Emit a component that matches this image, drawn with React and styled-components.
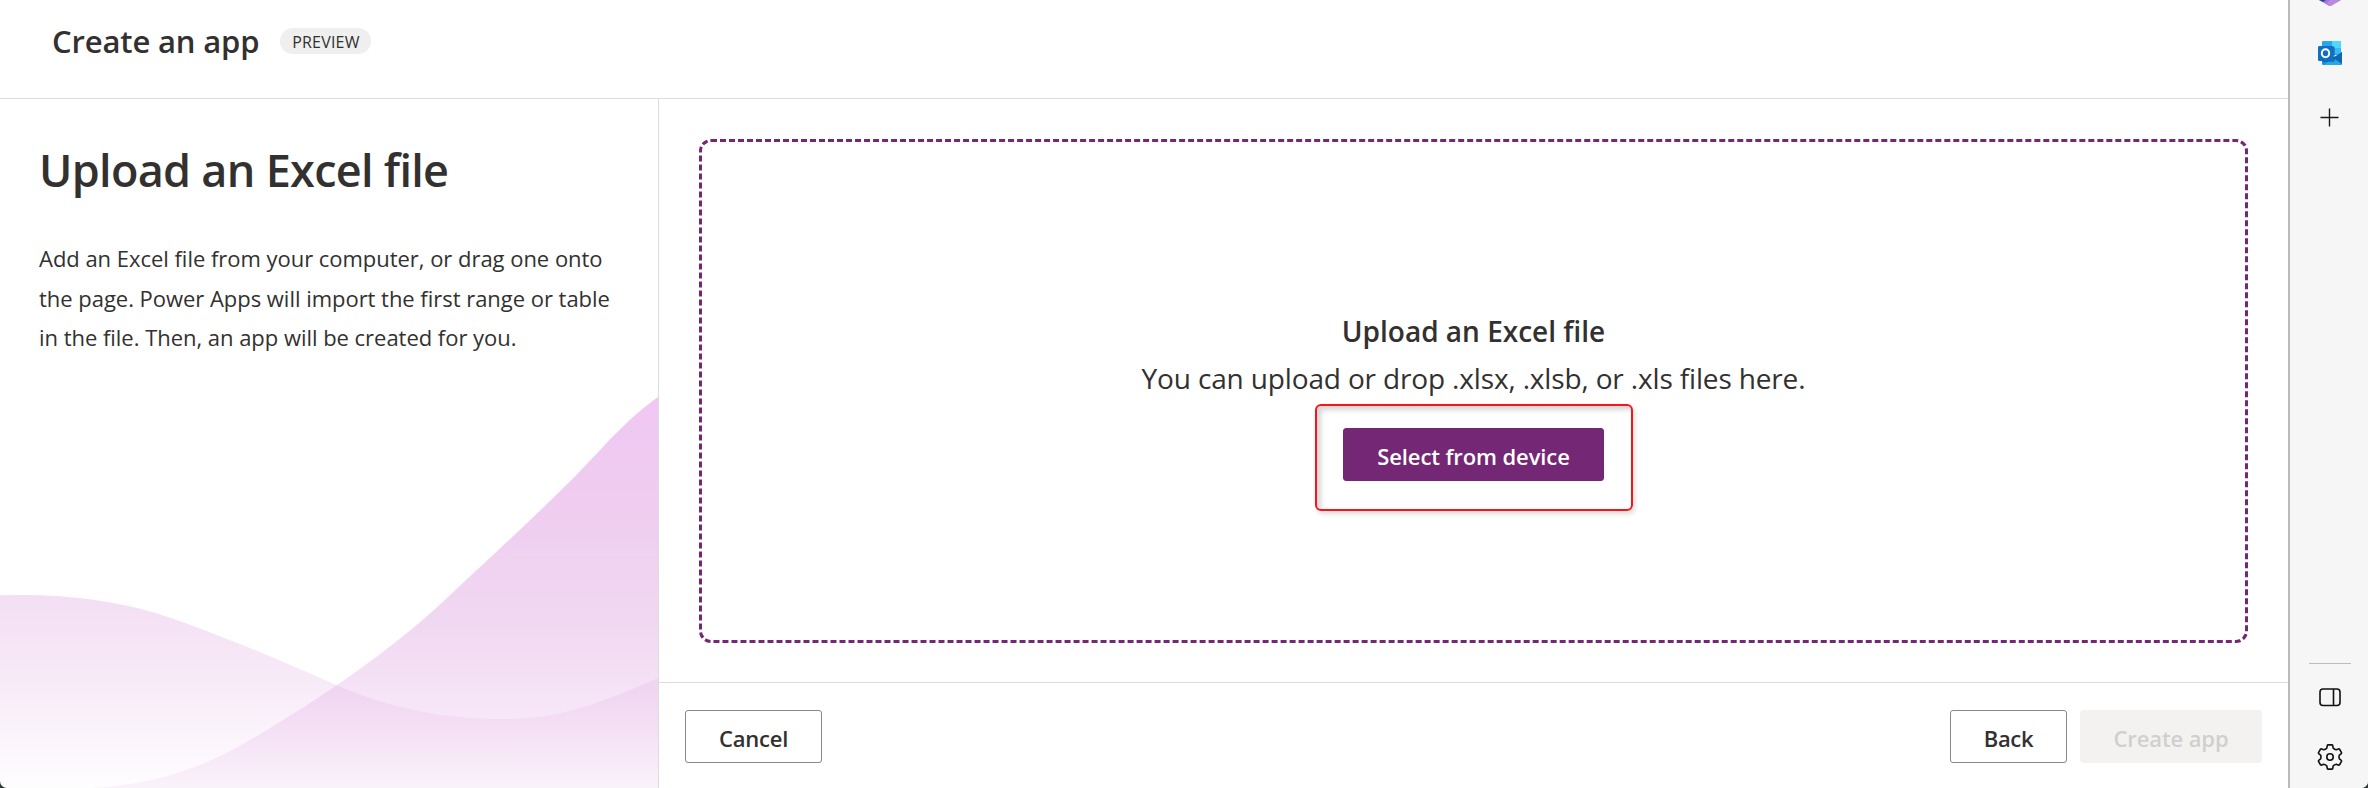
import React from "react";
import styled, { createGlobalStyle } from "styled-components";

const GlobalStyle = createGlobalStyle`
  * { box-sizing: border-box; }
  body {
    margin: 0;
    background: #2f3a36;
    color: #323130;
    font-family: "Open Sans", "Noto Sans", "Liberation Sans", sans-serif;
  }
`;

const Shell = styled.div`
  display: grid;
  grid-template-columns: 1fr 80px;
  height: 788px;
  background: #fff;
  border-radius: 0 0 7px 7px;
  overflow: hidden;
`;

const Page = styled.div`
  display: grid;
  grid-template-rows: 99px 1fr;
  min-width: 0;
`;

const Header = styled.header`
  display: flex;
  align-items: flex-start;
  gap: 21px;
  padding: 18px 0 0 52px;
  border-bottom: 1px solid #dcdcdc;
`;

const Text = styled.span`
  display: block;
  margin: 0;
  font-size: ${(p) => p.$size}px;
  line-height: ${(p) => p.$line}px;
  font-weight: ${(p) => p.$weight || 400};
  letter-spacing: ${(p) => p.$track || 0}px;
  white-space: nowrap;
`;

const Badge = styled.span`
  width: 91px;
  height: 26px;
  margin-top: 10px;
  border-radius: 13px;
  background: #efefef;
  text-align: center;
`;

const Body = styled.div`
  display: grid;
  grid-template-columns: 659px 1fr;
  min-height: 0;
`;

const Intro = styled.aside`
  display: flex;
  flex-direction: column;
  justify-content: space-between;
  padding-top: 36px;
  border-right: 1px solid #dcdcdc;
  min-height: 0;
`;

const IntroCopy = styled.div`
  display: flex;
  flex-direction: column;
  gap: 34px;
  padding-left: 39px;
`;

const Waves = styled.svg`
  display: block;
  width: 658px;
  height: 392px;
  flex: none;
`;

const Main = styled.main`
  display: grid;
  grid-template-rows: 1fr 106px;
`;

const DropArea = styled.section`
  display: flex;
  padding: 40px 40px 39px;
`;

const DropZone = styled.div`
  flex: 1;
  display: flex;
  flex-direction: column;
  align-items: center;
  padding-top: 165px;
  border: 3px dashed #742774;
  border-radius: 12px;
`;

const Highlight = styled.div`
  display: flex;
  justify-content: center;
  width: 318px;
  height: 107px;
  margin-top: 2px;
  padding-top: 22px;
  border: 2px solid #f5151b;
  border-radius: 6px;
  box-shadow: 2px 3px 5px rgba(0, 0, 0, 0.14),
    inset 4px 4px 5px rgba(0, 0, 0, 0.16);
`;

const Button = styled.button`
  display: flex;
  justify-content: center;
  width: ${(p) => p.$width}px;
  height: 53px;
  padding: 12px 0 0;
  border: 1px solid ${(p) => p.$border};
  border-radius: 3px;
  background: ${(p) => p.$bg};
  color: ${(p) => p.$ink};
  font: inherit;
`;

const Footer = styled.footer`
  display: flex;
  justify-content: space-between;
  padding: 27px 26px 0;
  border-top: 1px solid #dcdcdc;
`;

const Actions = styled.div`
  display: flex;
  gap: 13px;
`;

const Rail = styled.nav`
  display: flex;
  flex-direction: column;
  justify-content: space-between;
  align-items: center;
  border-left: 2px solid #bbb;
  background: #f6f6f6;
  padding: 0 0 18px 2px;
`;

const RailGroup = styled.div`
  display: flex;
  flex-direction: column;
  align-items: center;
  gap: ${(p) => p.$gap}px;

  svg { display: block; }
`;

const RailItem = styled.div`
  margin: ${(p) => p.$top}px 0 ${(p) => p.$bottom || 0}px;
`;

const Divider = styled.div`
  width: 42px;
  height: 1px;
  background: #bdbdbd;
`;

const neutral = { $border: "#8a8886", $bg: "#fff", $ink: "#323130" };
const primary = { $border: "#742774", $bg: "#742774", $ink: "#fff" };
const disabled = { $border: "#f3f2f1", $bg: "#f3f2f1", $ink: "#d0cfce" };

function WaveArt() {
  return (
    <Waves viewBox="0 396 658 392" aria-hidden="true">
      <defs>
        <linearGradient id="rise" gradientUnits="userSpaceOnUse" x1="0" y1="396" x2="0" y2="788">
          <stop offset="0" stopColor="#f0c7f3" />
          <stop offset="0.3" stopColor="#efcdf0" />
          <stop offset="0.6" stopColor="#f1d9f2" />
          <stop offset="0.85" stopColor="#f8e9f9" />
          <stop offset="1" stopColor="#fbf4fb" />
        </linearGradient>
        <linearGradient id="swell" gradientUnits="userSpaceOnUse" x1="0" y1="595" x2="0" y2="788">
          <stop offset="0" stopColor="#dfa6e0" stopOpacity="0.37" />
          <stop offset="0.5" stopColor="#dfa6e0" stopOpacity="0.21" />
          <stop offset="1" stopColor="#dfa6e0" stopOpacity="0.02" />
        </linearGradient>
      </defs>
      <path
        fill="url(#rise)"
        d="M90 788C150 785 200 770 250 740C318 700 387 654 447 598C503 545 555 499 603 447C622 426 640 410 658 397V788Z"
      />
      <path
        fill="url(#swell)"
        d="M0 595.3Q9 595 18 595C75 595 126 602 174 619C230 639 282 661 338 685.7C392 709 446 719 504 719C562 719 606 701 658 678V788H0Z"
      />
    </Waves>
  );
}

function CopilotIcon() {
  return (
    <svg width="24" height="7" viewBox="0 0 24 7" aria-hidden="true">
      <path d="M1 0H23L13.500 5.600Q12 6.600 10.500 5.600Z" fill="#a874d6" />
      <path d="M12 0H23L13.500 5.600Q12 6.600 10.500 5.600L8 4Z" fill="#b98ae2" />
      <path d="M1 0H8L5 2Z" fill="#1c4f9c" />
    </svg>
  );
}

function OutlookIcon() {
  return (
    <svg width="24" height="24" viewBox="0 0 24 24" aria-hidden="true">
      <rect x="4" y="0" width="19" height="14" rx="1" fill="#28a8ea" />
      <path d="M14 0H22Q23 0 23 1V9H14Z" fill="#50d9ff" />
      <path d="M5 6H14V14H5Z" fill="#0078d4" />
      <path d="M14 7H23V13H14Z" fill="#32bdf5" />
      <path d="M4 11L15 17L24 11V22.500Q24 24 22.500 24H5.500Q4 24 4 22.500Z" fill="#1490df" />
      <path d="M24 11V23L15 17Z" fill="#1168b1" />
      <path d="M24 23.200L15 17L6 24H22.500Q23.700 24 24 23.200Z" fill="#28a8ea" />
      <rect x="4" y="5.500" width="12.800" height="15.200" rx="1.200" fill="#0a3f73" opacity="0.55" />
      <rect x="0" y="5" width="15.500" height="15" rx="1.300" fill="#0f6fc6" />
      <ellipse cx="7.500" cy="12.200" rx="3.700" ry="4" fill="none" stroke="#fff" strokeWidth="2" />
    </svg>
  );
}

function PlusIcon() {
  return (
    <svg width="20" height="20" viewBox="0 0 20 20" stroke="#1b1b1b" strokeWidth="1.400" aria-hidden="true">
      <path d="M0.500 10.500H18.500M9.500 1.500V19.500" />
    </svg>
  );
}

function PanelIcon() {
  return (
    <svg width="22" height="19" viewBox="0 0 22 19" fill="none" stroke="#111" strokeWidth="1.600" aria-hidden="true">
      <rect x="1" y="1" width="20" height="16.500" rx="3" />
      <path d="M14.500 1V17.500" />
    </svg>
  );
}

const polar = (r, deg) => {
  const a = (deg * Math.PI) / 180;
  return `${(13 + r * Math.cos(a)).toFixed(2)} ${(13 + r * Math.sin(a)).toFixed(2)}`;
};

const gearPath =
  [0, 60, 120, 180, 240, 300]
    .map((turn, i) => {
      const c = turn - 90;
      return [
        `${i ? "L" : "M"}${polar(9.6, c - 19)}`,
        `L${polar(11.5, c - 14)}`,
        `Q${polar(12.3, c - 13)} ${polar(12.3, c - 9)}`,
        `L${polar(12.3, c + 9)}`,
        `Q${polar(12.3, c + 13)} ${polar(11.5, c + 14)}`,
        `L${polar(9.6, c + 19)}`,
        `Q${polar(8.6, c + 30)} ${polar(9.6, c + 41)}`,
      ].join("");
    })
    .join("") + "Z";

function GearIcon() {
  return (
    <svg width="26" height="26" viewBox="0 0 26 26" fill="none" stroke="#111" strokeWidth="1.600" strokeLinejoin="round" aria-hidden="true">
      <path d={gearPath} />
      <circle cx="13" cy="13" r="3.200" />
    </svg>
  );
}

export default function App() {
  return (
    <>
      <GlobalStyle />
      <Shell>
        <Page>
          <Header>
            <Text as="h1" $size={31} $line={46} $weight={600} $track={-0.15}>Create an app</Text>
            <Badge>
              <Text $size={16} $line={28} $weight={500} $track={0.2}>PREVIEW</Text>
            </Badge>
          </Header>
          <Body>
            <Intro>
              <IntroCopy>
                <Text as="h2" $size={45} $line={70} $weight={600} $track={-0.7}>Upload an Excel file</Text>
                <Text as="p" $size={22} $line={39.5} $track={-0.03}>
                  Add an Excel file from your computer, or drag one onto<br />
                  the page. Power Apps will import the first range or table<br />
                  in the file. Then, an app will be created for you.
                </Text>
              </IntroCopy>
              <WaveArt />
            </Intro>
            <Main>
              <DropArea>
                <DropZone>
                  <Text as="h3" $size={28} $line={48} $weight={600}>Upload an Excel file</Text>
                  <Text as="p" $size={28} $line={47} $track={-0.15}>You can upload or drop .xlsx, .xlsb, or .xls files here.</Text>
                  <Highlight>
                    <Button {...primary} $width={261}>
                      <Text $size={22} $line={30} $weight={600} $track={-0.1}>Select from device</Text>
                    </Button>
                  </Highlight>
                </DropZone>
              </DropArea>
              <Footer>
                <Button {...neutral} $width={137}>
                  <Text $size={22} $line={30} $weight={600} $track={-0.2}>Cancel</Text>
                </Button>
                <Actions>
                  <Button {...neutral} $width={117}>
                    <Text $size={22} $line={30} $weight={600} $track={-0.3}>Back</Text>
                  </Button>
                  <Button {...disabled} $width={182} disabled>
                    <Text $size={22} $line={30} $weight={600} $track={-0.1}>Create app</Text>
                  </Button>
                </Actions>
              </Footer>
            </Main>
          </Body>
        </Page>
        <Rail>
          <RailGroup $gap={34}>
            <CopilotIcon />
            <OutlookIcon />
            <RailItem $top={8}><PlusIcon /></RailItem>
          </RailGroup>
          <RailGroup $gap={0}>
            <Divider />
            <RailItem $top={24} $bottom={37}><PanelIcon /></RailItem>
            <GearIcon />
          </RailGroup>
        </Rail>
      </Shell>
    </>
  );
}
